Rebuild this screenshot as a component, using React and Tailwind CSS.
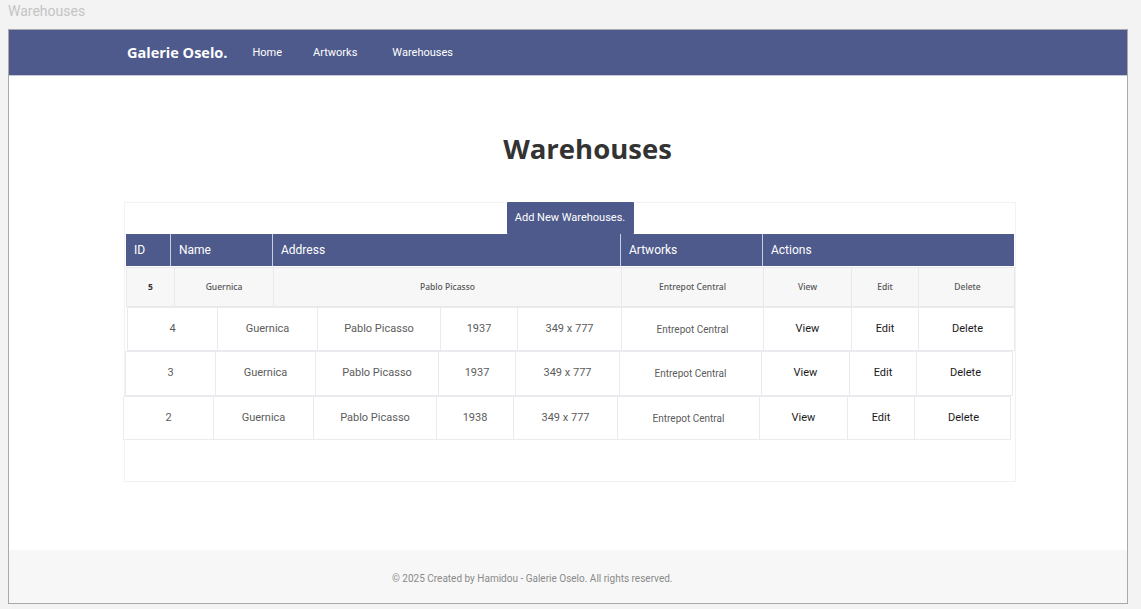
import React from "react";

const W = [90, 100, 123, 77, 104, 142, 88, 67, 97];
const rows = [
  { id: "4", year: "1937", ml: "ml-[2px]", h: "h-[44px]" },
  { id: "3", year: "1937", ml: "ml-0", h: "h-[45px]" },
  { id: "2", year: "1938", ml: "-ml-[2px]", h: "h-[44px]" },
];

function DataRow({ r }) {
  const vals = [r.id, "Guernica", "Pablo Picasso", r.year, "349 x 777", "Entrepot Central", "View", "Edit", "Delete"];
  return (
    <div className={`flex ${r.ml} ${r.h} w-[888px] border border-[#ebebef] bg-white`}>
      {vals.map((v, i) => (
        <div
          key={i}
          style={{ width: W[i] }}
          className={`flex shrink-0 items-center justify-center border-r border-[#ebebef] last:border-r-0 ${
            i === 5 ? "text-[10px] text-[#5c5c5c]" : i >= 6 ? "text-[11px] text-[#1a1a1a]" : "text-[11px] text-[#5c5c5c]"
          }`}
        >
          {v}
        </div>
      ))}
    </div>
  );
}

export default function App() {
  const head = [
    ["ID", 45],
    ["Name", 102],
    ["Address", 348],
    ["Artworks", 142],
    ["Actions", 251],
  ];
  const r5 = [
    ["5", 48],
    ["Guernica", 99],
    ["Pablo Picasso", 348],
    ["Entrepot Central", 142],
    ["View", 88],
    ["Edit", 67],
    ["Delete", 97],
  ];
  return (
    <div className="min-h-[609px] w-[1141px] bg-[#f3f3f3] font-['Roboto',sans-serif]">
      <div className="flex h-[29px] items-center pl-[8px] pb-[6px] text-[14px] text-[#c4c4c4]">Warehouses</div>
      <div className="ml-[8px] flex h-[575px] w-[1120px] flex-col border border-[#a9a9a9] bg-white">
        <nav className="flex h-[46px] shrink-0 items-center border-b border-[#c3c7d8] bg-[#4e5a8b] pl-[118px] pt-[1px] text-white">
          <span className="mr-[25px] font-['Open_Sans',sans-serif] text-[14.5px] font-bold">Galerie Oselo.</span>
          <span className="mr-[31px] text-[11px]">Home</span>
          <span className="mr-[35px] text-[11px]">Artworks</span>
          <span className="text-[11px]">Warehouses</span>
        </nav>
        <main className="flex-1">
          <h1 className="mt-[54px] h-[38px] pl-[39px] text-center font-['Open_Sans',sans-serif] text-[27.5px] font-bold leading-[38px] text-[#333]">
            Warehouses
          </h1>
          <div className="ml-[115px] mt-[34px] h-[280px] w-[892px] border border-[#f2f2f2]">
            <div className="flex h-[31px] justify-center -mt-px">
              <button className="h-[32px] w-[127px] rounded-[1px] bg-[#4e5a8b] text-[11px] text-white">Add New Warehouses.</button>
            </div>
            <div className="ml-[1px] mt-[1px] flex h-[32px] w-[888px] bg-[#4e5a8b] text-[12px] text-white">
              {head.map(([t, w], i) => (
                <div
                  key={t}
                  style={{ width: w }}
                  className={`flex shrink-0 items-center pl-[8px] ${i < 4 ? "border-r border-[#c9cde0]" : ""}`}
                >
                  {t}
                </div>
              ))}
            </div>
            <div className="ml-[1px] mt-[1px] flex h-[40px] w-[889px] border border-[#e9e9ec] bg-[#f7f7f7] font-['Noto_Sans',sans-serif] text-[8.5px] font-medium text-[#555]">
              {r5.map(([t, w], i) => (
                <div
                  key={i}
                  style={{ width: w }}
                  className={`flex shrink-0 items-center justify-center ${i < 6 ? "border-r border-[#e9e9ec]" : ""} ${i === 0 ? "font-bold text-[#333]" : ""}`}
                >
                  {t}
                </div>
              ))}
            </div>
            {rows.map((r) => (
              <DataRow key={r.id} r={r} />
            ))}
          </div>
        </main>
        <footer className="flex h-[53px] shrink-0 items-center bg-[#f7f7f7] pl-[383px] pt-[3px] text-[10px] text-[#8a8a8a]">
          © 2025 Created by Hamidou - Galerie Oselo. All rights reserved.
        </footer>
      </div>
    </div>
  );
}
